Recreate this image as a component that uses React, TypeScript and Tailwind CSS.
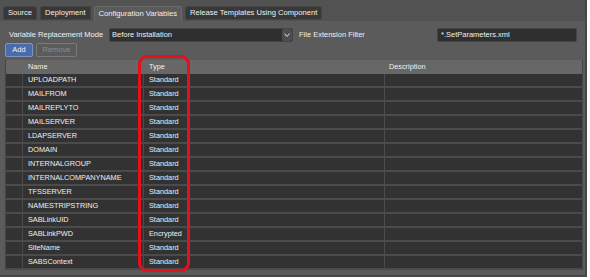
const rows: { name: string; type: string }[] = [
  { name: 'UPLOADPATH', type: 'Standard' },
  { name: 'MAILFROM', type: 'Standard' },
  { name: 'MAILREPLYTO', type: 'Standard' },
  { name: 'MAILSERVER', type: 'Standard' },
  { name: 'LDAPSERVER', type: 'Standard' },
  { name: 'DOMAIN', type: 'Standard' },
  { name: 'INTERNALGROUP', type: 'Standard' },
  { name: 'INTERNALCOMPANYNAME', type: 'Standard' },
  { name: 'TFSSERVER', type: 'Standard' },
  { name: 'NAMESTRIPSTRING', type: 'Standard' },
  { name: 'SABLinkUID', type: 'Standard' },
  { name: 'SABLinkPWD', type: 'Encrypted' },
  { name: 'SiteName', type: 'Standard' },
  { name: 'SABSContext', type: 'Standard' },
];

const tabs = ['Source', 'Deployment', 'Configuration Variables', 'Release Templates Using Component'];

export default function App() {
  return (
    <div
      className="relative w-[590px] h-[280px] bg-white overflow-hidden text-[#f0f0f0]"
      style={{ fontFamily: '"Liberation Sans", Arial, sans-serif' }}
    >
      <div className="w-[587px] h-[277px] bg-[#5b5b5b] border-r-[2px] border-b-[2px] border-[#474747] flex flex-col">
        {/* tab strip */}
        <div className="h-[21px] bg-[#525252] flex items-end pl-[3px] gap-[3px] text-[7.6px]">
          {tabs.map((t, i) => (
            <div
              key={t}
              className={
                i === 2
                  ? 'h-[15px] px-[4px] flex items-center bg-[#5b5b5b] rounded-t-[2px] border-t border-x border-[#6a6a6a]'
                  : 'h-[14px] px-[4px] mb-[1px] flex items-center bg-[#383838] rounded-[2px] border border-[#454545]'
              }
            >
              {t}
            </div>
          ))}
        </div>

        {/* filter row */}
        <div className="h-[20px] mt-[4px] flex items-center text-[7.5px]">
          <span className="ml-[9px] w-[100px]">Variable Replacement Mode</span>
          <div className="w-[184px] h-[14px] bg-[#2f2f2f] border border-[#444] rounded-[2px] flex items-center justify-between pl-[2px]">
            <span>Before Installation</span>
            <div className="w-[10px] h-[12px] bg-[#4d4d4d] rounded-[2px] flex items-center justify-center">
              <svg width="6" height="4" viewBox="0 0 6 4">
                <path d="M0.5 0.5 L3 3.5 L5.5 0.5" fill="none" stroke="#e0e0e0" strokeWidth="1" />
              </svg>
            </div>
          </div>
          <span className="ml-[6px] w-[138px]">File Extension Filter</span>
          <div className="w-[140px] h-[14px] bg-[#2f2f2f] border border-[#444] rounded-[2px] flex items-center pl-[3px]">
            *.SetParameters.xml
          </div>
        </div>

        {/* buttons */}
        <div className="flex gap-[3px] ml-[5px] mt-[-2px] h-[14px] text-[7.5px]">
          <div className="w-[28px] h-[14px] bg-[#4a6cab] border border-[#7d95c4] rounded-[2px] flex items-center justify-center">
            Add
          </div>
          <div className="w-[41px] h-[14px] border border-[#7a7a7a] rounded-[2px] flex items-center justify-center text-[#8c8c8c]">
            Remove
          </div>
        </div>

        {/* grid */}
        <div className="ml-[5px] mt-[3px] w-[578px] border-l border-r border-[#444] text-[7.3px]">
          <div className="h-[14px] bg-[#676767] flex items-center">
            <div className="w-[17px]" />
            <div className="w-[121px] pl-[5px]">Name</div>
            <div className="w-[241px] pl-[5px]">Type</div>
            <div className="flex-1 pl-[4px]">Description</div>
          </div>
          {rows.map((r) => (
            <div key={r.name} className="h-[14px] bg-[#323232] border-b-[2px] border-[#4b4b4b] flex">
              <div className="w-[17px] border-r border-[#4b4b4b]" />
              <div className="w-[121px] pl-[5px] border-r border-[#4b4b4b] flex items-center">{r.name}</div>
              <div className="w-[241px] pl-[5px] border-r border-[#4b4b4b] flex items-center">{r.type}</div>
              <div className="flex-1" />
            </div>
          ))}
        </div>
      </div>

      {/* annotation */}
      <div className="absolute left-[138px] top-[55px] w-[52px] h-[217px] border-[3px] border-[#e5101c] rounded-[9px]" />
    </div>
  );
}
